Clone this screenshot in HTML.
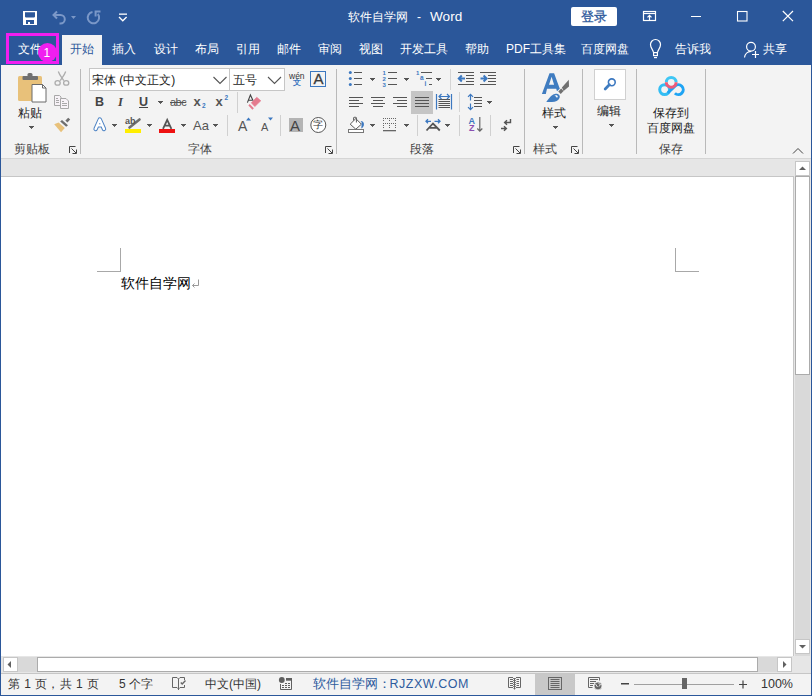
<!DOCTYPE html>
<html><head><meta charset="utf-8">
<style>
*{margin:0;padding:0;box-sizing:border-box}
html,body{width:812px;height:696px;overflow:hidden}
body{position:relative;background:#2b579a;font-family:"Liberation Sans",sans-serif;font-size:12px;color:#262626}
.a{position:absolute}
.t{position:absolute;white-space:nowrap;line-height:1}
.w{color:#fff}
svg{position:absolute;overflow:visible}
#ribbon{position:absolute;left:1px;top:65px;width:810px;height:94px;background:#f3f3f3;border-bottom:1px solid #d5d5d5}
#band{position:absolute;left:1px;top:159px;width:810px;height:18px;background:#e6e6e6}
#page{position:absolute;left:1px;top:176px;width:793px;height:480px;background:#fff;border-top:1px solid #c6c6c6;border-right:1px solid #c6c6c6}
#status{position:absolute;left:1px;top:673px;width:810px;height:22px;background:#f3f3f3;border-top:1px solid #c6c6c6}
.sep{position:absolute;width:1px;background:#b9b9b9}
.g{color:#444}
.dd{position:absolute;width:5px;height:1px;background:#555}.dd::before{content:"";position:absolute;left:1px;top:1px;width:3px;height:1px;background:#555}.dd::after{content:"";position:absolute;left:2px;top:2px;width:1px;height:1px;background:#666}
</style></head><body>
<!-- ========== title bar ========== -->
<svg style="left:0;top:0" width="812" height="34">
  <!-- save -->
  <rect x="23" y="11" width="14" height="14" fill="#fff"/>
  <path d="M25 12.2 H35 V16.8 L34.2 17.6 H25.8 L25 16.8 Z" fill="#2b579a"/>
  <rect x="26" y="20" width="8" height="4" fill="#2b579a"/>
  <rect x="28" y="22" width="2" height="2" fill="#fff"/>
  <!-- undo -->
  <g fill="none" stroke="#7b98c8" stroke-width="2">
    <path d="M53.5 15 H60.5 A4.3 4.3 0 0 1 60.5 23.6 H59.5"/>
    <path d="M57 11.5 L53.5 15 L57 18.5"/>
    <path d="M92.5 12 A5.7 5.7 0 1 0 97.8 14"/>
    <path d="M100.5 11.6 H95.6 V16.5"/>
  </g>
  <path d="M71 16 h5 l-2.5 3 z" fill="#7b97c6"/>
  <!-- customize -->
  <rect x="119" y="13.5" width="8" height="1.3" fill="#fff"/>
  <path d="M119 17 L122.8 20.8 L126.6 17" fill="none" stroke="#fff" stroke-width="1.3"/>
  <!-- ribbon display -->
  <g fill="none" stroke="#fff" stroke-width="1.2">
    <rect x="643.5" y="11.5" width="12" height="9"/>
    <path d="M643.5 13.5 H655.5"/>
    <path d="M649.5 20.5 V15.5 M647.5 17.3 L649.5 15.3 L651.5 17.3"/>
  </g>
  <!-- min max close -->
  <rect x="691" y="16" width="10" height="1" fill="#fff"/>
  <rect x="737.5" y="11.5" width="9.5" height="9.5" fill="none" stroke="#fff" stroke-width="1.1"/>
  <path d="M782.8 11 L793 21.2 M793 11 L782.8 21.2" stroke="#fff" stroke-width="1.2"/>
</svg>
<div class="t w" style="left:348px;top:11px;font-size:12px">软件自学网</div>
<div class="t w" style="left:417px;top:11px;font-size:12px">-</div>
<div class="t w" style="left:430px;top:10px;font-size:13.6px">Word</div>
<div class="a" style="left:571px;top:7px;width:46px;height:19px;background:#fff;border-radius:2px"></div>
<div class="t" style="left:581px;top:10.5px;font-size:12.5px;color:#2b579a;-webkit-text-stroke:0.3px #2b579a">登录</div>

<!-- ========== tab row ========== -->
<div class="a" style="left:62px;top:35px;width:40px;height:30px;background:#f3f3f3"></div>
<div class="t w" style="left:18px;top:43px">文件</div>
<div class="t" style="left:70px;top:43px;color:#2b579a">开始</div>
<div class="t w" style="left:112px;top:43px">插入</div>
<div class="t w" style="left:154px;top:43px">设计</div>
<div class="t w" style="left:195px;top:43px">布局</div>
<div class="t w" style="left:236px;top:43px">引用</div>
<div class="t w" style="left:277px;top:43px">邮件</div>
<div class="t w" style="left:318px;top:43px">审阅</div>
<div class="t w" style="left:359px;top:43px">视图</div>
<div class="t w" style="left:400px;top:43px">开发工具</div>
<div class="t w" style="left:465px;top:43px">帮助</div>
<div class="t w" style="left:506px;top:43px">PDF工具集</div>
<div class="t w" style="left:581px;top:43px">百度网盘</div>
<div class="t w" style="left:675px;top:43px">告诉我</div>
<div class="t w" style="left:763px;top:43px">共享</div>
<svg style="left:0;top:34px" width="812" height="31">
  <g fill="none" stroke="#fff" stroke-width="1.2">
    <path d="M653.5 18.5 C653 15.5 650.5 14 650.5 10.5 A5 5 0 0 1 660.5 10.5 C660.5 14 658 15.5 657.5 18.5 Z"/>
    <rect x="653.6" y="18.6" width="3.8" height="3"/>
    <circle cx="751" cy="12.8" r="4.4"/>
    <path d="M744.5 23.5 A7 7 0 0 1 751 17.3"/>
    <path d="M755.5 17 V24 M752 20.5 H759"/>
  </g>
  <rect x="654" y="23" width="3" height="1.2" fill="#fff"/>
</svg>

<!-- highlight box & badge -->
<div class="a" style="left:6px;top:33px;width:53px;height:31px;border:3px solid #f01ef0"></div>
<div class="a" style="left:37.5px;top:42.5px;width:19px;height:19px;border-radius:50%;background:#f01ef0"></div>
<div class="t w" style="left:43.5px;top:47px;font-size:12px">1</div>
<div id="ribbon"></div>
<!-- ========== ribbon content ========== -->
<div class="sep" style="left:80px;top:69px;height:85px"></div>
<div class="sep" style="left:336px;top:69px;height:85px"></div>
<div class="sep" style="left:524px;top:69px;height:85px"></div>
<div class="sep" style="left:582px;top:69px;height:85px"></div>
<div class="sep" style="left:636px;top:69px;height:85px"></div>
<div class="sep" style="left:705px;top:69px;height:85px"></div>
<!-- group labels -->
<div class="t g" style="left:14px;top:143px">剪贴板</div>
<div class="t g" style="left:188px;top:143px">字体</div>
<div class="t g" style="left:410px;top:143px">段落</div>
<div class="t g" style="left:533px;top:143px">样式</div>
<div class="t g" style="left:659px;top:143px">保存</div>
<svg style="left:0;top:0" width="812" height="160">
  <g fill="none" stroke="#444" stroke-width="1">
    <path d="M69.5 153 V146.5 H75.5 M71.5 148.5 L76 153 M72.5 153.5 H76.5 V149.5"/>
    <path d="M325.5 153 V146.5 H331.5 M327.5 148.5 L332 153 M328.5 153.5 H332.5 V149.5"/>
    <path d="M513.5 153 V146.5 H519.5 M515.5 148.5 L520 153 M516.5 153.5 H520.5 V149.5"/>
    <path d="M571.5 153 V146.5 H577.5 M573.5 148.5 L578 153 M574.5 153.5 H578.5 V149.5"/>
  </g>
  <!-- collapse ribbon -->
  <path d="M793 153.5 L798 148.5 L803 153.5" fill="none" stroke="#444" stroke-width="1"/>
</svg>

<!-- clipboard group -->
<svg style="left:0;top:0" width="90" height="160">
  <rect x="18" y="76" width="24" height="25" rx="1.5" fill="#e8c17a"/>
  <rect x="22.5" y="76" width="15.5" height="4" rx="1" fill="#707070"/>
  <rect x="27.5" y="73" width="5" height="4" rx="1.5" fill="#707070"/>
  <path d="M32 84.5 H42.5 L46 88 V102 H32 Z" fill="#fff" stroke="#6a6a6a" stroke-width="1"/>
  <path d="M42.5 84.5 V88 H46" fill="none" stroke="#6a6a6a" stroke-width="1"/>
  <!-- scissors -->
  <g fill="none" stroke="#adadad" stroke-width="1.3">
    <path d="M58.3 71.5 C59.5 75 61.5 77 63.8 80.6 M65.7 71.5 C64.5 75 62.5 77 60.2 80.6"/>
    <ellipse cx="57.6" cy="82.9" rx="2.6" ry="2.3"/>
    <ellipse cx="66.2" cy="82.9" rx="2.6" ry="2.3"/>
  </g>
  <!-- copy -->
  <g fill="#f7f2f7" stroke="#a8a8a8" stroke-width="1">
    <path d="M54.5 95.5 H59.5 L61 97 V105.5 H54.5 Z"/>
    <path d="M60.5 98.5 H66 L68.5 101 V108.5 H60.5 Z"/>
  </g>
  <g stroke="#a8a8a8" stroke-width="1">
    <path d="M56 98.5 H58 M56 100.5 H59 M56 102.5 H59 M62 101.5 H64 M62 103.5 H67 M62 105.5 H67"/>
  </g>
  <!-- format painter -->
  <path d="M54.2 124.2 L58.6 122.6 L64.8 128 L61 132.2 Z" fill="#e8c17a"/>
  <path d="M60.2 121.6 L62 120 L68 125.2 L66.2 126.8 Z" fill="#6e6e6e"/>
  <path d="M65.4 120.4 L68.2 117.8 L70.2 119.6 L67.4 122.4 Z" fill="#6e6e6e"/>
</svg>
<div class="t" style="left:18px;top:107px;color:#222">粘贴</div>
<div class="dd" style="left:29px;top:126px"></div>
<!-- font group -->
<div class="a" style="left:89px;top:68px;width:141px;height:23px;background:#fff;border:1px solid #c6c6c6"></div>
<div class="a" style="left:229px;top:68px;width:56px;height:23px;background:#fff;border:1px solid #c6c6c6"></div>
<div class="t" style="left:92px;top:74px;color:#222">宋体 (中文正文)</div>
<div class="t" style="left:233px;top:74px;color:#222">五号</div>
<svg style="left:0;top:0" width="340" height="160">
  <path d="M213.5 77 L220 83.5 L226.5 77" fill="none" stroke="#555" stroke-width="1.1"/>
  <path d="M268 77 L274.5 83.5 L281 77" fill="none" stroke="#555" stroke-width="1.1"/>
  <!-- char border -->
  <rect x="310.5" y="71.5" width="15" height="15" fill="none" stroke="#3c78c0" stroke-width="1"/>
  <!-- clear format eraser -->
  <path d="M251.3 102.8 L256.8 97.2 L260.8 100.8 L254.8 106.6 Z" fill="#e57b8e" stroke="#e57b8e" stroke-width="0.6" stroke-linejoin="round"/>
  <path d="M248.4 105.4 L249.6 104 L253.9 108.2 L252.4 109.7 Z" fill="#e57b8e"/>
  <path d="M247.4 102.6 L250.4 95 L253 100.5 M248.4 100.2 H252.4" fill="none" stroke="#444" stroke-width="1.1"/>
  <!-- separators -->
  <rect x="237" y="92" width="1" height="21" fill="#d0d0d0"/>
  <rect x="227" y="115" width="1" height="21" fill="#d0d0d0"/>
  <rect x="280" y="115" width="1" height="21" fill="#d0d0d0"/>
  <!-- highlight pen -->
  <path d="M129.5 127.5 L139.5 119.5" stroke="#6e6e6e" stroke-width="2.6" stroke-linecap="round"/>
  <rect x="125" y="129" width="16" height="4" fill="#ffee00"/>
  <rect x="159" y="129" width="16" height="4" fill="#ee1111"/>
  <path d="M163 128.8 L167.2 119.8 L171.4 128.8 M164.6 125.6 H169.8" fill="none" stroke="#555" stroke-width="1.8"/>
  <!-- grow/shrink triangles -->
  <path d="M246 120.5 L248.5 117.5 L251 120.5 Z" fill="#3c78c0"/>
  <path d="M268 117.5 L273 117.5 L270.5 120.5 Z" fill="#3c78c0"/>
  <!-- shaded A box -->
  <rect x="289" y="118" width="14" height="14" fill="#b4b4b4"/>
  <!-- enclosed char circle -->
  <circle cx="318.3" cy="125" r="7.5" fill="#fff" stroke="#555" stroke-width="1"/>
</svg>
<div class="t" style="left:289px;top:71.5px;font-size:8.5px;color:#333">wén</div>
<div class="t" style="left:292.5px;top:79px;font-size:8px;font-weight:bold;color:#3c78c0">文</div>
<div class="t" style="left:313.5px;top:71px;font-size:15px;color:#3a3a3a;-webkit-text-stroke:0.3px #3a3a3a">A</div>
<div class="t" style="left:95px;top:96px;font-size:12.5px;font-weight:bold;color:#444">B</div>
<div class="t" style="left:118px;top:96px;font-size:12.5px;font-weight:bold;font-style:italic;font-family:'Liberation Serif',serif;color:#444">I</div>
<div class="t" style="left:139px;top:96px;font-size:12.5px;font-weight:bold;color:#444;text-decoration:underline">U</div>
<div class="dd" style="left:158px;top:101px"></div>
<div class="t" style="left:170px;top:97px;font-size:11px;color:#555;text-decoration:line-through;letter-spacing:-0.5px">abc</div>
<div class="t" style="left:193.5px;top:95px;font-size:13px;font-weight:bold;color:#555">x</div>
<div class="t" style="left:202px;top:103px;font-size:6.5px;font-weight:bold;color:#3c78c0">2</div>
<div class="t" style="left:215.5px;top:95px;font-size:13px;font-weight:bold;color:#555">x</div>
<div class="t" style="left:224.5px;top:95px;font-size:6.5px;font-weight:bold;color:#3c78c0">2</div>
<svg style="left:0;top:0" width="200" height="140">
  <path d="M95.6 129 L99.8 119.6 L104 129 M97.4 125.4 H102.2" fill="none" stroke="#3c78c0" stroke-width="4.4" stroke-linejoin="round" stroke-linecap="round" opacity="0.9"/>
  <path d="M95.6 129 L99.8 119.6 L104 129 M97.4 125.4 H102.2" fill="none" stroke="#fff" stroke-width="2.4" stroke-linejoin="round" stroke-linecap="round"/>
</svg>
<div class="dd" style="left:112px;top:124px"></div>
<div class="t" style="left:125px;top:117px;font-size:9px;font-weight:bold;color:#555">ab</div>
<div class="dd" style="left:147px;top:124px"></div>
<div class="dd" style="left:181px;top:124px"></div>
<div class="t" style="left:193px;top:119px;font-size:13px;color:#555">Aa</div>
<div class="dd" style="left:213px;top:124px"></div>
<div class="t" style="left:238px;top:119px;font-size:14px;color:#555">A</div>
<div class="t" style="left:261px;top:122px;font-size:11px;color:#555">A</div>
<div class="t" style="left:290px;top:118px;font-size:15px;color:#444">A</div>
<div class="t" style="left:313px;top:120px;font-size:10px;color:#333">字</div>
<!-- paragraph group -->
<svg style="left:0;top:0" width="530" height="160">
  <g fill="#3c78c0">
    <circle cx="350.3" cy="72.5" r="1.5"/><circle cx="350.3" cy="78.5" r="1.5"/><circle cx="350.3" cy="84.5" r="1.5"/>
  </g>
  <g stroke="#555" stroke-width="1">
    <path d="M354 72.5 H362 M354 78.5 H362 M354 84.5 H362"/>
    <path d="M388 72.5 H397 M388 78.5 H397 M388 84.5 H397"/>
    <path d="M421 72.5 H432 M426 78.5 H432 M429 84.5 H432"/>
  </g>
  <!-- indent -->
  <g stroke="#555" stroke-width="1">
    <path d="M458 72.5 H474 M466 75.5 H474 M466 78.5 H474 M466 81.5 H474 M458 84.5 H474"/>
    <path d="M480 72.5 H496 M488 75.5 H496 M488 78.5 H496 M488 81.5 H496 M480 84.5 H496"/>
  </g>
  <g stroke="#3c78c0" stroke-width="2" fill="none">
    <path d="M459 78.5 H465 M461.8 75.5 L458.8 78.5 L461.8 81.5"/>
    <path d="M480.5 78.5 H486.5 M483.6 75.5 L486.6 78.5 L483.6 81.5"/>
  </g>
  <rect x="450" y="69" width="1" height="21" fill="#d5d5d5"/>
  <!-- align row -->
  <rect x="411" y="91" width="22" height="23" fill="#c5c5c5"/>
  <g stroke="#555" stroke-width="1">
    <path d="M349 97.5 H363 M349 100.5 H359 M349 103.5 H363 M349 106.5 H359"/>
    <path d="M371 97.5 H385 M373 100.5 H383 M371 103.5 H385 M373 106.5 H383"/>
    <path d="M393 97.5 H407 M397 100.5 H407 M393 103.5 H407 M397 106.5 H407"/>
    <path d="M415 97.5 H429 M415 100.5 H429 M415 103.5 H429 M415 106.5 H429"/>
    <path d="M438.5 99.5 H450 M438.5 101.5 H450 M438.5 103.5 H450 M438.5 105.5 H450 M438.5 107.5 H450"/>
    <path d="M474 97.5 H482 M474 100.5 H482 M474 103.5 H482 M474 106.5 H482"/>
  </g>
  <g stroke="#3c78c0" stroke-width="1.2" fill="none">
    <path d="M436.5 94 V109.5 M451.5 94 V109.5"/>
    <path d="M439 96.5 H449.5 M441.5 94 L439 96.5 L441.5 99 M447 94 L449.5 96.5 L447 99"/>
    <path d="M470.5 94.5 V100.5 M470.5 103.5 V109.5 M468 96.8 L470.5 94.3 L473 96.8 M468 107.2 L470.5 109.7 L473 107.2"/>
  </g>
  <rect x="459" y="92" width="1" height="20" fill="#d5d5d5"/>
  <!-- row 3 -->
  <rect x="348.5" y="129.5" width="15" height="3" fill="#fff" stroke="#777" stroke-width="1"/>
  <path d="M350.2 124.2 L355.8 118.6 L361.4 124.2 L355.8 129.2 Z" fill="#fff" stroke="#5a5a5a" stroke-width="1"/>
  <path d="M353.6 120.5 V117.8 Q353.6 117.3 354.1 117.3 H355.9 Q356.4 117.3 356.4 117.8 V122.5" fill="none" stroke="#5a5a5a" stroke-width="1"/>
  <path d="M360.5 121 C363 121 364.5 123 363.8 125.5 C363.3 127 362.3 128 361.3 128.6 L361.6 124.6 L361.6 122 Z" fill="#3c78c0"/>
  <g fill="#666">
    <path d="M383 118h1v1h-1zM385 118h1v1h-1zM387 118h1v1h-1zM389 118h1v1h-1zM391 118h1v1h-1zM393 118h1v1h-1zM395 118h1v1h-1z"/>
    <path d="M383 123h1v1h-1zM385 123h1v1h-1zM387 123h1v1h-1zM389 123h1v1h-1zM391 123h1v1h-1zM393 123h1v1h-1zM395 123h1v1h-1z"/>
    <path d="M383 120h1v1h-1zM383 125h1v1h-1zM383 127h1v1h-1zM389 120h1v1h-1zM389 125h1v1h-1zM389 127h1v1h-1zM395 120h1v1h-1zM395 125h1v1h-1zM395 127h1v1h-1z"/>
    <rect x="383" y="130" width="13" height="1.3"/>
  </g>
  <rect x="417" y="115" width="1" height="21" fill="#d0d0d0"/>
  <rect x="459" y="115" width="1" height="21" fill="#d0d0d0"/>
  <rect x="490" y="115" width="1" height="21" fill="#d0d0d0"/>
  <!-- chinese layout -->
  <g stroke="#3c78c0" stroke-width="1.3" fill="none">
    <path d="M426 121.3 H431 M428 119.3 L426 121.3 L428 123.3"/>
    <path d="M434.5 121.3 H440 M438 119.3 L440 121.3 L438 123.3"/>
  </g>
  <path d="M426.5 130.5 L433 123.5 L439.8 130.5 M429.5 127.8 H436.5" fill="none" stroke="#555" stroke-width="1.8"/>
  <!-- sort -->
  <path d="M479.8 117 V131 M477.3 128.5 L479.8 131.2 L482.3 128.5" fill="none" stroke="#666" stroke-width="1.2"/>
  <!-- show/hide arrows -->
  <g fill="none" stroke="#555" stroke-width="1.4">
    <path d="M510.5 119 V122.5 H504.5 M507 120.2 L504.6 122.5 L507 124.8"/>
    <path d="M501 128.5 H506.5 M504 126.2 L506.4 128.5 L504 130.8"/>
  </g>
</svg>
<div class="dd" style="left:370px;top:78px"></div>
<div class="dd" style="left:404px;top:78px"></div>
<div class="dd" style="left:436px;top:78px"></div>
<div class="dd" style="left:487px;top:101px"></div>
<div class="dd" style="left:370px;top:124px"></div>
<div class="dd" style="left:404px;top:124px"></div>
<div class="dd" style="left:445px;top:124px"></div>
<div class="t" style="left:382.5px;top:70px;font-size:6px;font-weight:bold;color:#3c78c0;line-height:6px">1<br>2<br>3</div>
<div class="t" style="left:416px;top:70px;font-size:6px;font-weight:bold;color:#3c78c0">1</div>
<div class="t" style="left:420px;top:75px;font-size:6.5px;font-weight:bold;color:#3c78c0">a</div>
<div class="t" style="left:424.5px;top:81px;font-size:6.5px;font-weight:bold;color:#3c78c0">i</div>
<div class="t" style="left:468.5px;top:116.5px;font-size:9px;font-weight:bold;color:#3c78c0">A</div>
<div class="t" style="left:469px;top:124px;font-size:9px;font-weight:bold;color:#8a4fb0">Z</div>

<!-- styles group -->
<svg style="left:0;top:0" width="720" height="160">
  <path d="M541.9 93.9 L549.5 73.2 H554.1 L559.8 88.8 L557 91.2 L556.2 88.8 H547 L545.8 93.9 Z M549 84.7 H554.1 L551.6 76.8 Z" fill="#3f7cc0" fill-rule="evenodd"/>
  <path d="M561.9 87.6 L568.8 79.8 L569 86.6 L563.6 91 Z" fill="#707070"/>
  <path d="M558.3 91.5 L561.2 88.6 L563.6 91 L560.7 93.9 Z" fill="#707070"/>
  <path d="M546.3 101.9 C549 98 551.5 94.5 555 93.9 C558.5 93.5 560.5 95.5 559.5 98 C558.5 100.5 555.5 101.9 552 101.9 Z" fill="#3f7cc0"/>
  <path d="M554.3 95.8 C555.5 94.8 557.5 95 557.8 96.5 L557 98 C556.5 96.8 555.5 96.2 554.3 95.8 Z" fill="#fff"/>
  <!-- editing -->
  <rect x="594.5" y="69.5" width="31" height="30" fill="#fff" stroke="#d0d0d0" stroke-width="1"/>
  <circle cx="611.8" cy="82.3" r="3.4" fill="none" stroke="#3c78c0" stroke-width="1.6"/>
  <path d="M609.3 84.8 L605.2 88.9" stroke="#3f7cc0" stroke-width="2.8" stroke-linecap="round"/>
  <!-- baidu -->
  <g fill="none" stroke-width="3">
    <circle cx="664.6" cy="89.6" r="4.9" stroke="#33bdf3"/>
    <path d="M667.8 93 L674.9 86.2 A4.9 4.9 0 1 1 674.9 93.2" stroke="#1ea4f4"/>
    <path d="M666.3 82.3 A4.9 4.9 0 0 1 676.1 82.3" stroke="#3ec6f4"/>
    <path d="M666.3 82.3 A4.9 4.9 0 0 0 676.1 82.3" stroke="#ef5a78"/>
  </g>
</svg>
<div class="t" style="left:542px;top:107px;color:#222">样式</div>
<div class="dd" style="left:553px;top:126px"></div>
<div class="t" style="left:597px;top:105px;color:#222">编辑</div>
<div class="dd" style="left:609px;top:124px"></div>
<div class="t" style="left:653px;top:107px;color:#222">保存到</div>
<div class="t" style="left:647px;top:122px;color:#222">百度网盘</div>
<div id="band"></div>
<div id="page"></div>
<!-- page corner marks -->
<div class="a" style="left:120px;top:248px;width:1px;height:24px;background:#a8a8a8"></div>
<div class="a" style="left:97px;top:271px;width:24px;height:1px;background:#a8a8a8"></div>
<div class="a" style="left:675px;top:248px;width:1px;height:24px;background:#a8a8a8"></div>
<div class="a" style="left:675px;top:271px;width:24px;height:1px;background:#a8a8a8"></div>
<div class="t" style="left:121px;top:276px;font-size:14px;color:#000">软件自学网</div>
<svg style="left:0;top:0" width="220" height="300">
  <path d="M198.5 279.5 V285.5 H192.5 M194.5 283.5 L192.5 285.5 L194.5 287.5" fill="none" stroke="#9a9a9a" stroke-width="1"/>
</svg>
<!-- vertical scrollbar -->
<div class="a" style="left:794px;top:159px;width:17px;height:514px;background:#e6e6e6"></div>
<div class="a" style="left:795px;top:176px;width:15px;height:480px;background:#d9d9d9"></div>
<div class="a" style="left:795px;top:161px;width:15px;height:15px;background:#fff;border:1px solid #c6c6c6"></div>
<div class="a" style="left:795px;top:176px;width:15px;height:199px;background:#fff;border:1px solid #ababab"></div>
<div class="a" style="left:795px;top:639px;width:15px;height:15px;background:#fff;border:1px solid #c6c6c6"></div>
<svg style="left:0;top:0" width="812" height="696">
  <path d="M799 170 L802.5 166.5 L806 170 Z" fill="#606060"/>
  <path d="M799 645 L806 645 L802.5 648.5 Z" fill="#606060"/>
  <path d="M7.5 664.5 L11 661 L11 668 Z" fill="#606060"/>
  <path d="M783 661 L786.5 664.5 L783 668 Z" fill="#606060"/>
</svg>
<!-- horizontal scrollbar -->
<div class="a" style="left:1px;top:656px;width:810px;height:17px;background:#e6e6e6"></div>
<div class="a" style="left:3px;top:657px;width:789px;height:15px;background:#d9d9d9"></div>
<div class="a" style="left:3px;top:657px;width:15px;height:15px;background:#fff;border:1px solid #c6c6c6"></div>
<div class="a" style="left:37px;top:657px;width:721px;height:15px;background:#fff;border:1px solid #ababab"></div>
<div class="a" style="left:777px;top:657px;width:15px;height:15px;background:#fff;border:1px solid #c6c6c6"></div>
<svg style="left:0;top:0" width="812" height="696">
  <path d="M7.5 664.5 L11 661 L11 668 Z" fill="#606060"/>
  <path d="M783 661 L786.5 664.5 L783 668 Z" fill="#606060"/>
</svg>
<!-- status bar -->
<div id="status"></div>
<div class="t" style="left:8px;top:678px;color:#333;letter-spacing:0.4px">第 1 页，共 1 页</div>
<div class="t" style="left:119px;top:678px;color:#333">5 个字</div>
<div class="t" style="left:205px;top:678px;color:#333">中文(中国)</div>
<div class="t" style="left:313px;top:678px;font-size:12.5px;color:#2e5c9e">软件自学网：</div>
<div class="t" style="left:389.5px;top:678px;font-size:12.5px;color:#2e5c9e;letter-spacing:0.5px">RJZXW.COM</div>
<div class="t" style="left:761px;top:678px;font-size:12.5px;color:#333">100%</div>
<div class="a" style="left:535px;top:674px;width:40px;height:21px;background:#c8c8c8"></div>
<svg style="left:0;top:0" width="812" height="696">
  <g fill="none" stroke="#666" stroke-width="1">
    <!-- proofing book -->
    <path d="M177 677.5 H172.5 V687.5 H177 M177 677.5 L178.5 679 L180 677.5 H184.5 V680 M184.5 685 V687.5 H180 M177 687.5 L178.5 689 L180 687.5 M178.5 679 V690"/>
    <path d="M180.8 682.5 L182.2 684 L185.5 680.6" stroke-width="1.4"/>
    <!-- read mode -->
    <path d="M513 677.5 H508.5 V687.5 H513 M516 677.5 H520.5 V687.5 H516"/>
    <path d="M510 679.5 H513 M510 681.5 H513 M510 683.5 H513 M510 685.5 H513 M516.5 679.5 H519 M516.5 681.5 H519 M516.5 683.5 H519 M516.5 685.5 H519"/>
    <path d="M514.5 678.5 V689.5 M513.2 678.5 H515.8 M513.2 680.5 H515.8 M513.2 682.5 H515.8 M513.2 684.5 H515.8 M513.2 686.5 H515.8 M513.5 688.5 H515.5" stroke-width="1"/>
    <!-- print layout -->
    <rect x="548.5" y="677.5" width="13" height="12"/>
    <path d="M550.5 679.5 H559.5 M550.5 681.5 H559.5 M550.5 683.5 H559.5 M550.5 685.5 H559.5 M550.5 687.5 H559.5"/>
    <!-- web layout -->
    <path d="M592.5 687.5 H588.5 V677.5 H599.5 V680.5"/>
    <path d="M590 679.5 H598 M590 681.5 H596 M590 683.5 H594 M590 685.5 H593"/>
  </g>
  <circle cx="598" cy="685.9" r="4" fill="#666" stroke="#f3f3f3" stroke-width="0.8"/>
  <path d="M595.5 684 L597.5 687 M598.5 683.5 L600.5 684.5 L599 686.5" fill="none" stroke="#f3f3f3" stroke-width="0.9"/>
  <!-- macro -->
  <circle cx="281.8" cy="680" r="2.9" fill="#606060"/>
  <path d="M280.5 684 V689.5 H291.5 V678.5" fill="none" stroke="#606060" stroke-width="1"/>
  <rect x="286" y="678" width="6" height="2.7" fill="#606060"/>
  <g fill="#606060">
    <rect x="285" y="683" width="2" height="1"/><rect x="288" y="683" width="2" height="1"/>
    <rect x="282" y="685" width="2" height="1"/><rect x="285" y="685" width="2" height="1"/><rect x="288" y="685" width="2" height="1"/>
    <rect x="282" y="687" width="2" height="1"/><rect x="285" y="687" width="2" height="1"/><rect x="288" y="687" width="2" height="1"/>
  </g>
  <!-- zoom slider -->
  <rect x="621" y="683" width="8" height="1.5" fill="#444"/>
  <rect x="634" y="684" width="100" height="1" fill="#a0a0a0"/>
  <rect x="682" y="678" width="5" height="11" fill="#666"/>
  <path d="M739 684.5 H747 M743 680.5 V688.5" stroke="#444" stroke-width="1.2"/>
</svg>
</body></html>
